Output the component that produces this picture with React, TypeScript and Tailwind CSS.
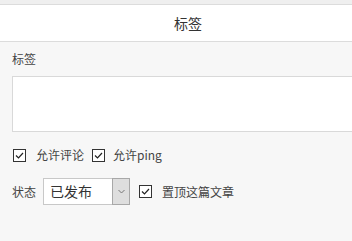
import { useState } from 'react';

// ─── Tag / publish options panel ─────────────────────────────────────────────

export default function App() {
  const [allowComment, setAllowComment] = useState(true);
  const [allowPing, setAllowPing] = useState(true);
  const [sticky, setSticky] = useState(true);
  const [status, setStatus] = useState('已发布');

  return (
    <div
      className="w-[352px] h-[241px] overflow-hidden bg-[#f7f7f7] text-[#444] text-[12px]"
      style={{ fontFamily: '"Noto Sans CJK SC", "Noto Sans", sans-serif' }}
    >
      {/* Header */}
      <div className="h-[5px] bg-[#efefef] border-b border-[#dcdcdc]" />
      <div className="flex h-[37px] items-center justify-center bg-white border-b border-[#dcdcdc] pl-[24px] text-[14px] text-[#333]">
        标签
      </div>

      <div className="pl-[12px] pt-[7px]">
        <div className="leading-[20px]">标签</div>
        <textarea className="mt-[7px] block h-[56px] w-[360px] resize-none border border-[#d9d9d9] bg-white outline-none" />

        {/* Options */}
        <div className="mt-[13px] flex items-center h-[20px]">
          <span className="ml-[1px]">
            <Check checked={allowComment} onChange={setAllowComment} />
          </span>
          <span className="ml-[10px]">允许评论</span>
          <span className="ml-[8px]">
            <Check checked={allowPing} onChange={setAllowPing} />
          </span>
          <span className="ml-[8px]">允许ping</span>
        </div>

        {/* Status */}
        <div className="mt-[13px] flex items-center">
          <span>状态</span>
          <div className="ml-[7px] flex h-[27px] w-[87px] border border-[#c8c8c8] bg-white">
            <select
              value={status}
              onChange={(e) => setStatus(e.target.value)}
              className="flex-1 appearance-none bg-transparent pl-[6px] text-[14px] text-[#333] outline-none"
            >
              <option>已发布</option>
              <option>草稿</option>
            </select>
            <div className="-my-px -mr-px flex w-[18px] items-center justify-center border border-[#a8a8a8] bg-[#dedede]">
              <svg width="7" height="5" viewBox="0 0 7 5">
                <path d="M0.5 1l3 3 3-3" stroke="#777" fill="none" strokeWidth="1" />
              </svg>
            </div>
          </div>
          <span className="ml-[9px]">
            <Check checked={sticky} onChange={setSticky} />
          </span>
          <span className="ml-[10px]">置顶这篇文章</span>
        </div>
      </div>
    </div>
  );
}

function Check({ checked, onChange }: { checked: boolean; onChange: (v: boolean) => void }) {
  return (
    <button
      onClick={() => onChange(!checked)}
      className="flex h-[13px] w-[13px] items-center justify-center border border-[#333] bg-white"
    >
      {checked && (
        <svg width="11" height="11" viewBox="0 0 11 11">
          <path d="M2 5.5l2.5 2.5 4.5-5" stroke="#222" fill="none" strokeWidth="1.2" />
        </svg>
      )}
    </button>
  );
}
